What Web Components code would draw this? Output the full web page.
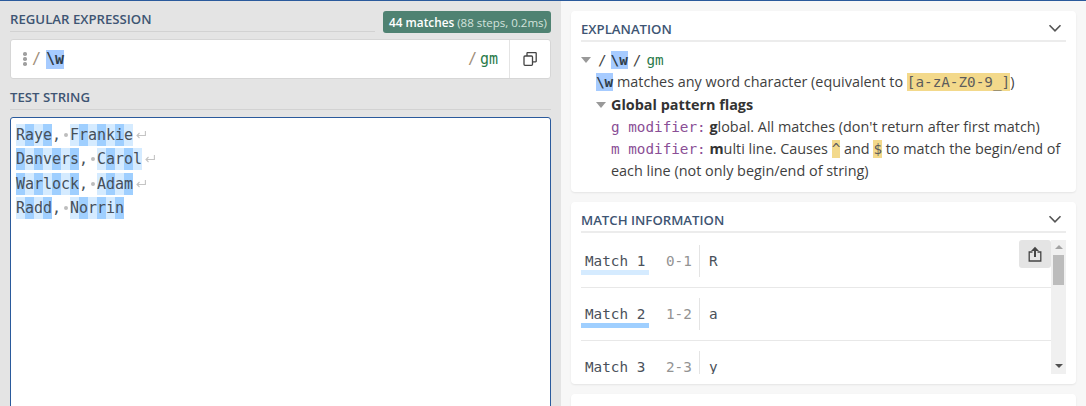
<!DOCTYPE html>
<html>
<head>
<meta charset="utf-8">
<style>
html, body { margin: 0; height: 406px; overflow: hidden; background: #f7f7f7; }
body { font-family: "Open Sans", sans-serif; font-size: 14px; color: #3f3f3f; }
</style>
</head>
<body>
<regex-app>
  <div slot="left">
    <section-title style="margin-top:10px">
      Regular Expression
      <match-badge slot="aside"><b>44 matches</b> (88 steps, 0.2ms)</match-badge>
    </section-title>
    <regex-bar pattern="\w" flags="gm"></regex-bar>
    <section-title style="margin-top:10px">Test String</section-title>
    <test-editor text="Raye, Frankie
Danvers, Carol
Warlock, Adam
Radd, Norrin"></test-editor>
  </div>
  <div slot="right">
    <info-card heading="Explanation" style="height:181px;margin-top:10px">
      <explain-tree></explain-tree>
    </info-card>
    <info-card heading="Match Information" style="height:182px;margin-top:10px">
      <match-list></match-list>
    </info-card>
    <info-card style="height:40px;margin-top:10px"></info-card>
  </div>
</regex-app>

<script>
const MONO = '"DejaVu Sans Mono", monospace';

class RegexApp extends HTMLElement {
  connectedCallback() {
    this.attachShadow({ mode: 'open' });
    this.shadowRoot.innerHTML = `
      <style>
        :host { display: grid; grid-template-columns: 561px 525px; height: 406px; border-top: 1px solid #2a5a9c; box-sizing: border-box; overflow: hidden; }
        .left { background: #e4e4e4; padding: 0 10px; overflow: hidden; }
        .right { padding: 0 10px; overflow: hidden; }
      </style>
      <div class="left"><slot name="left"></slot></div>
      <div class="right"><slot name="right"></slot></div>
    `;
  }
}

class SectionTitle extends HTMLElement {
  connectedCallback() {
    this.attachShadow({ mode: 'open' });
    this.shadowRoot.innerHTML = `
      <style>
        :host { display: flex; align-items: flex-start; gap: 8px; }
        .text { flex: 1; height: 20px; line-height: 17px; border-bottom: 1px solid #d2d2d2; font-size: 13.2px; font-weight: 600; text-transform: uppercase; color: #3e5573; }
      </style>
      <div class="text"><slot></slot></div>
      <slot name="aside"></slot>
    `;
  }
}

class MatchBadge extends HTMLElement {
  connectedCallback() {
    this.attachShadow({ mode: 'open' });
    this.shadowRoot.innerHTML = `
      <style>
        :host { display: block; width: 168px; box-sizing: border-box; height: 22px; line-height: 22px; padding: 0 0 0 6px; background: #4f8272; border-radius: 3px; color: #d3e2dd; font-size: 11.5px; white-space: nowrap; }
        ::slotted(b) { color: #fff; font-weight: 600; font-size: 11.8px; }
      </style>
      <slot></slot>
    `;
  }
}

class RegexBar extends HTMLElement {
  connectedCallback() {
    this.attachShadow({ mode: 'open' });
    const pattern = this.getAttribute('pattern');
    const flags = this.getAttribute('flags');
    this.shadowRoot.innerHTML = `
      <style>
        :host { display: flex; align-items: center; height: 40px; margin-top: 6px; box-sizing: border-box; background: #fff; border: 1px solid #d6d6d6; border-radius: 3px; font-family: ${MONO}; font-size: 15px; letter-spacing: -0.03px; }
        .grip { display: flex; flex-direction: column; gap: 1.5px; margin-left: 12px; width: 4px; }
        .grip i { width: 3.5px; height: 3.5px; border-radius: 50%; background: #a0a0a0; }
        .slash { color: #a08d78; margin-left: 5px; }
        .pattern { background: #a6cbff; height: 19px; line-height: 19px; margin-left: 5px; color: #2f3d4a; font-weight: 700; }
        .space { flex: 1; }
        .flags { color: #2a7a4a; margin-left: 3px; margin-right: 11px; }
        .copy { display: flex; align-items: center; justify-content: center; width: 40px; height: 100%; border-left: 1px solid #e4e4e4; }
      </style>
      <span class="grip"><i></i><i></i><i></i></span>
      <span class="slash">/</span>
      <span class="pattern">${pattern}</span>
      <span class="space"></span>
      <span class="slash">/</span>
      <span class="flags">${flags}</span>
      <span class="copy">
        <svg width="14" height="14" viewBox="0 0 14 14" fill="none" stroke="#444" stroke-width="1.3">
          <rect x="1" y="4" width="8.5" height="9.3" rx="1"/>
          <path d="M4 4V1.2a.6.6 0 0 1 .6-.6h8a.6.6 0 0 1 .6.6v8a.6.6 0 0 1-.6.6H9.5"/>
        </svg>
      </span>
    `;
  }
}

class TestEditor extends HTMLElement {
  connectedCallback() {
    this.attachShadow({ mode: 'open' });
    const lines = this.getAttribute('text').split('\n');
    let count = 0;
    const retArrow = '<svg width="10" height="8" viewBox="0 0 10 8" fill="none" stroke="#c4c4c4" stroke-width="1.1"><path d="M9.4 0v4.5H1M3.5 2L1 4.5 3.5 7"/></svg>';
    const rows = lines.map((line, i) => {
      const cells = [...line].map(ch => {
        if (/\w/.test(ch)) {
          count++;
          return `<i class="${count % 2 ? 'odd' : 'even'}"></i>`;
        }
        return ch === ' ' ? '<i class="sp"></i>' : '<i></i>';
      }).join('');
      const ret = i < lines.length - 1 ? `<i class="ret">${retArrow}</i>` : '';
      return `<div class="line"><div class="marks">${cells}${ret}</div><span class="txt">${line}</span></div>`;
    }).join('');
    this.shadowRoot.innerHTML = `
      <style>
        :host { display: block; height: 300px; margin-top: 7px; box-sizing: border-box; padding: 6px 5px; background: #fff; border: 1px solid #2a5a9c; border-radius: 3px; font-family: ${MONO}; font-size: 15px; color: #46505a; }
        .line { position: relative; height: 22px; margin-bottom: 2.33px; line-height: 22px; white-space: pre; letter-spacing: -0.03px; }
        .txt { position: relative; }
        .marks { position: absolute; inset: 0; display: flex; }
        .marks i { display: block; width: 9px; height: 22px; flex: none; }
        .odd { background: #d5ebff; }
        .even { background: #9fcfff; }
        .sp { position: relative; }
        .sp::after { content: ""; position: absolute; left: 2.5px; top: 9px; width: 4px; height: 4px; border-radius: 50%; background: #bdbdbd; }
        .marks .ret { width: 13px; padding: 7px 0 0 3px; box-sizing: border-box; }
        .ret svg { display: block; }
      </style>
      ${rows}
    `;
  }
}

class InfoCard extends HTMLElement {
  connectedCallback() {
    this.attachShadow({ mode: 'open' });
    const heading = this.getAttribute('heading');
    const head = heading ? `
      <div class="head">
        <span>${heading}</span>
        <svg width="14" height="9" viewBox="0 0 14 9" fill="none" stroke="#555" stroke-width="1.6"><path d="M1.5 1.2l5.5 5.6 5.5-5.6"/></svg>
      </div>` : '';
    this.shadowRoot.innerHTML = `
      <style>
        :host { display: block; box-sizing: border-box; padding: 0 10px; background: #fff; border-radius: 4px; box-shadow: 0 1px 2px rgba(0,0,0,.08); overflow: hidden; }
        .head { display: flex; align-items: center; justify-content: space-between; height: 31px; padding-top: 6px; box-sizing: border-box; border-bottom: 2px solid #ececec; font-size: 13.2px; font-weight: 600; text-transform: uppercase; color: #3e5573; }
        .head svg { margin-right: 4px; }
      </style>
      ${head}
      <slot></slot>
    `;
  }
}

class ExplainTree extends HTMLElement {
  connectedCallback() {
    this.attachShadow({ mode: 'open' });
    this.shadowRoot.innerHTML = `
      <style>
        :host { display: block; padding-top: 7px; font-size: 14.4px; line-height: 22.3px; color: #3f3f3f; }
        .row { position: relative; padding-left: 15px; white-space: nowrap; }
        .tri { position: absolute; left: 0; top: 8px; width: 0; height: 0; border: 5px solid transparent; border-top: 6px solid #999; border-bottom: 0; }
        .sub { padding-left: 30px; }
        .sub .tri { left: 15px; }
        .sub2 { padding-left: 30px; white-space: normal; }
        code { font-family: ${MONO}; font-size: 14.3px; line-height: 1; }
        .re { background: #a6cbff; font-weight: 700; color: #2f3d4a; padding: 1px 0; }
        .sl { color: #444; }
        .fl { color: #2a7a4a; }
        .cls { background: #f3d98b; color: #5c5c5c; padding: 1px 0; }
        .mod { color: #8a4f96; }
        .strong { font-weight: 700; color: #333; }
      </style>
      <div class="row"><span class="tri"></span><code class="sl" style="margin-left:2px">/</code><code class="re" style="margin-left:4px">\\w</code><code class="sl" style="margin-left:5px">/</code><code class="fl" style="margin-left:5px">gm</code></div>
      <div class="row"><code class="re">\\w</code> matches any word character (equivalent to <code class="cls">[a-zA-Z0-9_]</code>)</div>
      <div class="row sub"><span class="tri"></span><span class="strong">Global pattern flags</span></div>
      <div class="row sub2"><code class="mod">g modifier:</code> <span class="strong">g</span>lobal. All matches (don't return after first match)</div>
      <div class="row sub2"><code class="mod">m modifier:</code> <span class="strong">m</span>ulti line. Causes <code class="cls">^</code> and <code class="cls">$</code> to match the begin/end of each line (not only begin/end of string)</div>
    `;
  }
}

class MatchList extends HTMLElement {
  connectedCallback() {
    this.attachShadow({ mode: 'open' });
    const data = [
      ['Match 1', '0-1', 'R', '#d5ebff'],
      ['Match 2', '1-2', 'a', '#9fcfff'],
      ['Match 3', '2-3', 'y', 'transparent']
    ];
    const rows = data.map(([name, range, ch, bar]) => `
      <div class="row">
        <span class="name" style="border-bottom-color:${bar}">${name}</span>
        <span class="range">${range}</span>
        <span class="ch">${ch}</span>
      </div>`).join('');
    this.shadowRoot.innerHTML = `
      <style>
        :host { display: flex; height: 134px; margin-top: 7px; position: relative; overflow: hidden; font-family: ${MONO}; font-size: 14.3px; color: #4a515a; }
        .rows { flex: 1; margin-top: -5px; }
        .row { display: flex; align-items: flex-start; height: 53px; box-sizing: border-box; border-bottom: 1px solid #e8e8e8; padding-top: 10px; line-height: 32px; }
        .name { width: 68px; box-sizing: border-box; height: 30px; padding-left: 4px; border-bottom: 5px solid transparent; white-space: pre; }
        .range { width: 50px; box-sizing: border-box; padding-left: 17px; color: #939393; white-space: nowrap; }
        .ch { border-left: 1px solid #e4e4e4; padding-left: 9px; height: 32px; }
        .share { position: absolute; right: 15px; top: 0; width: 32px; height: 28px; background: #e4e4e4; border-radius: 3px; display: flex; align-items: center; justify-content: center; }
        .bar { width: 15px; background: #f0f0f0; position: relative; display: flex; flex-direction: column; align-items: center; }
        .up { width: 0; height: 0; border: 4px solid transparent; border-bottom: 4px solid #a3a3a3; border-top: 0; margin-top: 5px; }
        .thumb { width: 11px; height: 30px; background: #bcbcbc; margin-top: 6px; }
        .down { width: 0; height: 0; border: 4px solid transparent; border-top: 4px solid #505050; border-bottom: 0; margin-top: auto; margin-bottom: 6px; }
      </style>
      <div class="rows">${rows}</div>
      <div class="share">
        <svg width="14" height="16" viewBox="0 0 14 16" fill="none" stroke="#444" stroke-width="1.3">
          <path d="M4.5 6H1.2v9h11.6V6H9.5"/>
          <path d="M7 11V3" stroke-width="2"/>
          <path d="M3 5L7 .8 11 5z" fill="#444" stroke="none"/>
        </svg>
      </div>
      <div class="bar"><i class="up"></i><i class="thumb"></i><i class="down"></i></div>
    `;
  }
}

customElements.define('regex-app', RegexApp);
customElements.define('section-title', SectionTitle);
customElements.define('match-badge', MatchBadge);
customElements.define('regex-bar', RegexBar);
customElements.define('test-editor', TestEditor);
customElements.define('info-card', InfoCard);
customElements.define('explain-tree', ExplainTree);
customElements.define('match-list', MatchList);
</script>
</body>
</html>
